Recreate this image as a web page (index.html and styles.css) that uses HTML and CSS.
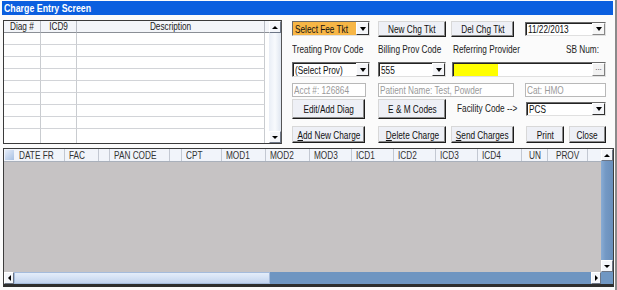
FILE: index.html
```html
<!DOCTYPE html>
<html>
<head>
<meta charset="utf-8">
<link rel="stylesheet" href="styles.css">
</head>
<body>
<div class="window">
  <div class="titlebar"><span class="t">Charge Entry Screen</span></div>
  <div class="top">
    <div class="diag">
      <div class="diag-table">
        <div class="dh c1"><span class="t">Diag #</span></div><div class="dh c2"><span class="t">ICD9</span></div><div class="dh c3"><span class="t">Description</span></div><div class="dh c4"></div>
        <div class="dc"></div><div class="dc"></div><div class="dc"></div><div class="dc e"></div>
        <div class="dc"></div><div class="dc"></div><div class="dc"></div><div class="dc e"></div>
        <div class="dc"></div><div class="dc"></div><div class="dc"></div><div class="dc e"></div>
        <div class="dc"></div><div class="dc"></div><div class="dc"></div><div class="dc e"></div>
        <div class="dc"></div><div class="dc"></div><div class="dc"></div><div class="dc e"></div>
        <div class="dc"></div><div class="dc"></div><div class="dc"></div><div class="dc e"></div>
        <div class="dc"></div><div class="dc"></div><div class="dc"></div><div class="dc e"></div>
        <div class="dc"></div><div class="dc"></div><div class="dc"></div><div class="dc e"></div>
        <div class="dc last"></div><div class="dc last"></div><div class="dc last"></div><div class="dc e last"></div>
      </div>
      <div class="vscroll light">
        <div class="arrow"><span class="tri up"></span></div>
        <div class="track"></div>
        <div class="arrow"><span class="tri down"></span></div>
      </div>
    </div>

    <div class="controls">
      <div class="row r1">
        <div class="combo fee w78"><span class="val"><span class="t">Select Fee Tkt</span></span><span class="dd"><span class="tri down"></span></span></div>
        <button class="btn w68 g8"><span class="t">New Chg Tkt</span></button>
        <button class="btn w63 g5"><span class="t">Del Chg Tkt</span></button>
        <div class="combo date g11"><span class="val"><span class="t">11/22/2013</span></span><span class="dd"><span class="tri down"></span></span></div>
      </div>
      <div class="row labels">
        <span class="lbl l1"><span class="t">Treating Prov Code</span></span>
        <span class="lbl l2"><span class="t">Billing Prov Code</span></span>
        <span class="lbl l3"><span class="t">Referring Provider</span></span>
        <span class="lbl l4"><span class="t">SB Num:</span></span>
      </div>
      <div class="row r3">
        <div class="combo w78"><span class="val"><span class="t">(Select Prov)</span></span><span class="dd"><span class="tri down"></span></span></div>
        <div class="combo w68 g8"><span class="val"><span class="t">555</span></span><span class="dd"><span class="tri down"></span></span></div>
        <div class="field ref g6"><span class="hilite"></span><span class="dots">...</span></div>
      </div>
      <div class="row r4">
        <div class="field dis acct"><span class="t">Acct #: 126864</span></div>
        <div class="field dis patient"><span class="t">Patient Name: Test, Powder</span></div>
        <div class="field dis cat"><span class="t">Cat: HMO</span></div>
      </div>
      <div class="row r5">
        <button class="btn tall w73"><span class="t">Edit/Add Diag</span></button>
        <button class="btn tall w68 g13"><span class="t">E &amp; M Codes</span></button>
        <span class="lbl fac"><span class="t">Facility Code --&gt;</span></span>
        <div class="combo pcs"><span class="val"><span class="t">PCS</span></span><span class="dd"><span class="tri down"></span></span></div>
      </div>
      <div class="row r6">
        <button class="btn w73"><span class="t"><u>A</u>dd New Charge</span></button>
        <button class="btn w68 g13"><span class="t"><u>D</u>elete Charge</span></button>
        <button class="btn w63 g5"><span class="t"><u>S</u>end Charges</span></button>
        <button class="btn w38 g12"><span class="t">Print</span></button>
        <button class="btn w37 g5"><span class="t">Close</span></button>
      </div>
    </div>
  </div>

  <div class="charges">
    <div class="cmain">
      <div class="chead">
        <div class="hc icon"><span class="sq"></span></div>
        <div class="hc" style="width:50px"><span class="t">DATE FR</span></div>
        <div class="hc" style="width:34px"><span class="t">FAC</span></div>
        <div class="hc" style="width:11px"></div>
        <div class="hc" style="width:60px"><span class="t">PAN CODE</span></div>
        <div class="hc" style="width:12px"></div>
        <div class="hc" style="width:40px"><span class="t">CPT</span></div>
        <div class="hc" style="width:44px"><span class="t">MOD1</span></div>
        <div class="hc" style="width:44px"><span class="t">MOD2</span></div>
        <div class="hc" style="width:42px"><span class="t">MOD3</span></div>
        <div class="hc" style="width:42px"><span class="t">ICD1</span></div>
        <div class="hc" style="width:42px"><span class="t">ICD2</span></div>
        <div class="hc" style="width:42px"><span class="t">ICD3</span></div>
        <div class="hc" style="width:44px"><span class="t">ICD4</span></div>
        <div class="hc mid" style="width:26px"><span class="t">UN</span></div>
        <div class="hc mid" style="width:40px"><span class="t">PROV</span></div>
        <div class="hc rest"></div>
      </div>
      <div class="cbody"></div>
    </div>
    <div class="vscroll blue">
      <div class="arrow"><span class="tri up"></span></div>
      <div class="track"></div>
      <div class="arrow"><span class="tri down"></span></div>
    </div>
    <div class="hscroll">
      <div class="harrow"><span class="tri left"></span></div>
      <div class="thumb"></div>
      <div class="htrack"></div>
      <div class="harrow"><span class="tri right"></span></div>
    </div>
    <div class="corner"></div>
  </div>
</div>
</body>
</html>
```

FILE: styles.css
```css
* { box-sizing: border-box; }
html, body { margin: 0; padding: 0; }
body {
  background: #fbfbfb;
  width: 617px;
  height: 290px;
  overflow: hidden;
  font-family: "Liberation Sans", Arial, sans-serif;
  font-size: 11px;
  color: #111;
}
.t {
  display: inline-block;
  white-space: nowrap;
  transform: scaleX(0.75);
  transform-origin: left center;
}
.window {
  width: 617px;
  height: 290px;
  border-right: 2px solid #8a8a8a;
  padding-top: 1px;
}
.titlebar {
  margin: 0 2px 0 2px;
  height: 14px;
  background: #0b5fdf;
  color: #fff;
  font-weight: bold;
  font-size: 11px;
  line-height: 14px;
  padding-left: 2px;
}
.titlebar .t { transform: scaleX(0.8); }
.top {
  display: flex;
  margin-top: 5px;
  padding-left: 3px;
  height: 124px;
}
/* diag grid */
.diag {
  display: flex;
  width: 279px;
  height: 124px;
  border: 1px solid #3a3a3a;
  border-right-color: #555;
  background: #fff;
}
.diag-table {
  flex: 1;
  display: grid;
  grid-template-columns: 37px 36px 188px 1fr;
  grid-template-rows: 12px repeat(8, 12px) 1fr;
}
.dh {
  background: #f3f5f9;
  border-right: 1px solid #b8bcc4;
  border-bottom: 1px solid #8b8f96;
  display: flex;
  justify-content: center;
  line-height: 11px;
  color: #222;
}
.dh .t { transform-origin: center; }
.dh.c4 { border-right: none; }
.dc {
  border-right: 1px solid #c9ccd0;
  border-bottom: 1px solid #d2d4d8;
}
.dc.e { border-right: none; border-bottom: none; }
.dc.last { border-bottom: none; }

.vscroll {
  width: 12px;
  display: flex;
  flex-direction: column;
}
.vscroll .track { flex: 1; }
.vscroll.light { background: #e6ecf4; }
.vscroll.light .track {
  background: linear-gradient(90deg, #e9eef6 0, #f8fafd 50%, #dfe6f0 100%);
}
.arrow, .harrow {
  width: 12px;
  height: 12px;
  background: #f4f6fa;
  border: 1px solid;
  border-color: #ffffff #6d7686 #6d7686 #ffffff;
  display: flex;
  align-items: center;
  justify-content: center;
}
.tri { width: 0; height: 0; display: block; }
.tri.up { border-left: 3px solid transparent; border-right: 3px solid transparent; border-bottom: 3px solid #000; }
.tri.down { border-left: 3px solid transparent; border-right: 3px solid transparent; border-top: 3px solid #000; }
.tri.left { border-top: 3px solid transparent; border-bottom: 3px solid transparent; border-right: 3px solid #000; }
.tri.right { border-top: 3px solid transparent; border-bottom: 3px solid transparent; border-left: 3px solid #000; }

/* controls */
.controls {
  margin-left: 10px;
  width: 315px;
}
.row { display: flex; }
.r1 { margin-top: 1px; height: 16px; align-items: flex-start; }
.labels { margin-top: 6px; height: 13px; line-height: 13px; }
.r3 { margin-top: 6px; height: 15px; }
.r4 { margin-top: 6px; height: 14px; }
.r5 { margin-top: 2px; height: 20px; align-items: flex-start; }
.r6 { margin-top: 7px; height: 17px; }

.w78 { width: 78px; }
.w73 { width: 73px; }
.w68 { width: 68px; }
.w63 { width: 63px; }
.w38 { width: 38px; }
.w37 { width: 37px; }
.g5 { margin-left: 5px; }
.g6 { margin-left: 6px; }
.g8 { margin-left: 8px; }
.g11 { margin-left: 11px; }
.g12 { margin-left: 12px; }
.g13 { margin-left: 13px; }

.btn {
  font: inherit;
  color: #111;
  height: 16px;
  padding: 0;
  background: #eef0f6;
  border: 1px solid;
  border-color: #d8d8d8 #1c1c1c #1c1c1c #d8d8d8;
  box-shadow: inset -1px -1px 0 #8a8a8a;
  display: flex;
  align-items: center;
  justify-content: center;
  overflow: visible;
}
.btn .t { transform-origin: center; line-height: 12px; }
.btn.tall { height: 20px; }
.r6 .btn { height: 17px; }
.btn u { text-decoration: underline; }

.combo {
  height: 15px;
  display: flex;
  background: #fff;
  border: 1px solid;
  border-color: #6a6a6a #e0e0e0 #e0e0e0 #6a6a6a;
  box-shadow: inset 1px 1px 0 #222;
}
.combo .val {
  flex: 1;
  min-width: 0;
  padding-left: 2px;
  padding-top: 1px;
  line-height: 12px;
  white-space: nowrap;
  overflow: hidden;
}
.combo .dd {
  flex: none;
  width: 13px;
  height: 13px;
  background: #f4f5f8;
  border: 1px solid;
  border-color: #fff #303030 #303030 #fff;
  display: flex;
  align-items: center;
  justify-content: center;
}
.combo .dd .tri.down { border-left-width: 3px; border-right-width: 3px; border-top-width: 4px; }
.combo.fee .val { background: #f7b646; }
.combo.date { width: 81px; height: 14px; margin-top: 1px; }
.combo.date .dd { height: 12px; background: #f6f6f6; border-color: #fff #888 #888 #fff; }
.combo.date .val { padding-top: 0; line-height: 12px; }

.lbl { color: #222; white-space: nowrap; }
.l1 { width: 86px; }
.l2 { width: 75px; }
.l3 { width: 113px; }
.l4 { width: 40px; }

.field {
  height: 15px;
  background: #fff;
  border: 1px solid;
  border-color: #6a6a6a #e0e0e0 #e0e0e0 #6a6a6a;
  box-shadow: inset 1px 1px 0 #222;
}
.field.ref {
  width: 154px;
  display: flex;
  padding: 1px 0 0 1px;
}
.hilite { width: 44px; height: 12px; background: #ffff00; }
.dots {
  margin-left: auto;
  width: 13px;
  height: 13px;
  margin-top: -1px;
  background: #f2f2f2;
  border: 1px solid;
  border-color: #fff #808080 #808080 #fff;
  font-size: 8px;
  line-height: 8px;
  text-align: center;
  color: #333;
}
.field.dis {
  height: 14px;
  border: 1px solid #b8b8b8;
  box-shadow: none;
  color: #9a9a9a;
  line-height: 12px;
  padding-left: 1px;
  white-space: nowrap;
  overflow: hidden;
}
.acct { width: 74px; }
.patient { width: 136px; margin-left: 12px; }
.cat { width: 81px; margin-left: 11px; }

.fac { margin-left: 11px; width: 69px; line-height: 19px; }
.combo.pcs { width: 80px; height: 14px; margin-top: 3px; }
.combo.pcs .val { padding-top: 0; }
.combo.pcs .dd { height: 12px; }

/* charges grid */
.charges {
  margin: 4px 0 0 3px;
  width: 611px;
  height: 139px;
  display: grid;
  grid-template-columns: 1fr 12px;
  grid-template-rows: 1fr 12px;
  border: 1px solid #3c3c3c;
  border-bottom: 3px solid #2e2e2e;
  background: #c6c3c4;
}
.cmain { display: flex; flex-direction: column; min-width: 0; }
.chead {
  height: 13px;
  display: flex;
  background: #f1f4fa;
  border-bottom: 1px solid #a9b0bb;
}
.hc {
  flex: none;
  border-right: 1px solid #c3c8d2;
  padding-left: 4px;
  line-height: 12px;
  color: #333;
  white-space: nowrap;
  overflow: hidden;
}
.hc.mid { padding-left: 0; display: flex; justify-content: center; }
.hc.mid .t { transform-origin: center; }
.hc.icon { width: 11px; padding: 1px; display: flex; border-right: none; }
.hc.icon .sq { flex: 1; background: linear-gradient(135deg, #e6eefa, #a8c0e2); }
.hc.rest { flex: 1; border-right: none; }
.cbody { flex: 1; background: #c6c3c4; }

.vscroll.blue { background: #7097c3; }
.vscroll.blue .track { background: linear-gradient(90deg, #89acd4 0, #7398c4 40%, #6a8fbb 100%); }
.hscroll {
  display: flex;
  background: #7097c3;
  min-width: 0;
}
.harrow { width: 10px; height: 12px; flex: none; }
.thumb {
  flex: none;
  width: 256px;
  background: linear-gradient(180deg, #e4edfa 0, #d0def3 60%, #c2d3ee 100%);
  border: 1px solid #a4bbdc;
}
.htrack { flex: 1; background: #6e95c1; }
.corner { background: #7097c3; }
```
